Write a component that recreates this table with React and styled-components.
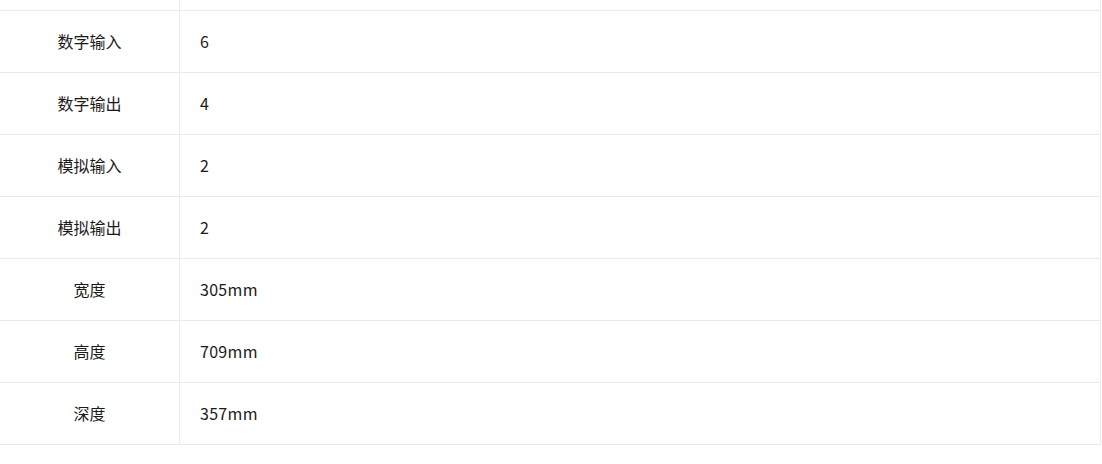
import React from "react";
import styled, { createGlobalStyle } from "styled-components";

const Global = createGlobalStyle`
  html, body { margin: 0; padding: 0; background: #fff; }
  body { font-family: "Noto Sans CJK SC", "Noto Sans", sans-serif; }
`;

const Table = styled.div`
  width: 1101px;
  border-right: 1px solid #ebebeb;
  box-sizing: border-box;
`;

const Row = styled.div`
  display: grid;
  grid-template-columns: 180px 1fr;
  height: ${(p) => (p.$partial ? "11px" : "62px")};
  border-bottom: 1px solid #ebebeb;
  box-sizing: border-box;
`;

const Label = styled.div`
  border-right: 1px solid #ebebeb;
  display: flex;
  align-items: center;
  justify-content: center;
  padding-bottom: 2px;
  font-size: 16px;
  color: #1a1a1a;
`;

const Value = styled.div`
  display: flex;
  align-items: center;
  padding-left: 20px;
  padding-bottom: 2px;
  font-size: 16px;
  letter-spacing: 0.3px;
  color: #1a1a1a;
`;

const rows = [
  ["数字输入", "6"],
  ["数字输出", "4"],
  ["模拟输入", "2"],
  ["模拟输出", "2"],
  ["宽度", "305mm"],
  ["高度", "709mm"],
  ["深度", "357mm"],
];

export default function App() {
  return (
    <>
      <Global />
      <Table>
        <Row $partial>
          <Label />
          <Value />
        </Row>
        {rows.map(([k, v]) => (
          <Row key={k}>
            <Label>{k}</Label>
            <Value>{v}</Value>
          </Row>
        ))}
      </Table>
    </>
  );
}
